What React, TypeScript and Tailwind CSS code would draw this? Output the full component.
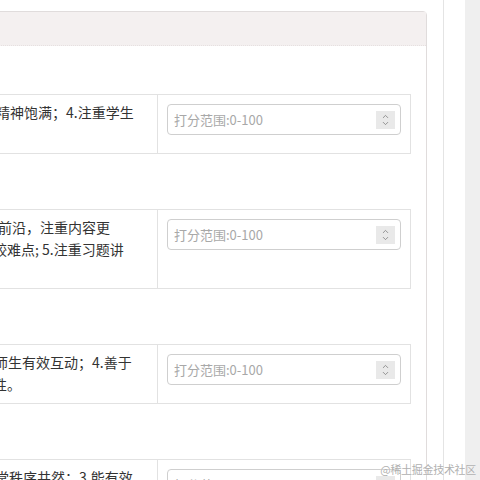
import React from 'react';
import { ChevronUp, ChevronDown } from 'lucide-react';

type Row = {
  lines: { text: string; shift: string }[];
  height: string;
};

const rows: Row[] = [
  { lines: [{ text: '精神饱满；4.注重学生', shift: 'ml-[-6px]' }], height: 'h-[60px]' },
  {
    lines: [
      { text: '前沿，注重内容更', shift: 'ml-[-4px]' },
      { text: '较难点; 5.注重习题讲', shift: 'ml-[-9px]' },
    ],
    height: 'h-[80px]',
  },
  {
    lines: [
      { text: '师生有效互动；4.善于', shift: 'ml-[-8px]' },
      { text: '性。', shift: 'ml-[-9px]' },
    ],
    height: 'h-[60px]',
  },
  { lines: [{ text: '堂秩序井然；3.能有效', shift: 'ml-[-7px]' }], height: 'h-[80px]' },
];

const ScoreInput: React.FC = () => (
  <div className="h-[31px] flex items-center border border-[#cfcfcf] rounded-[4px] bg-white pl-[6px] pr-[5px]">
    <input
      type="text"
      placeholder="打分范围:0-100"
      className="flex-1 min-w-0 text-[13px] text-[#555] placeholder:text-[#a8a8a8] outline-none bg-transparent"
    />
    <div className="w-[19px] h-[18px] bg-[#e9e9e9] flex flex-col items-center justify-center text-[#777]">
      <ChevronUp size={9} strokeWidth={2} className="-mb-[1px]" />
      <ChevronDown size={9} strokeWidth={2} className="-mt-[1px]" />
    </div>
  </div>
);

const App: React.FC = () => {
  return (
    <div
      className="w-[480px] h-[480px] overflow-hidden bg-white flex relative"
      style={{ fontFamily: '"Noto Sans CJK SC", "Liberation Sans", sans-serif' }}
    >
      {/* main column */}
      <div className="w-[443px] flex-none pt-[11px] pr-[16px]">
        <div className="ml-[-40px] border border-[#e0dcdc] rounded-t-[4px] h-[600px]">
          <div className="h-[34px] bg-[#f4f0f0] border-b border-dotted border-[#e6e0e0]" />
          <div className="pt-[48px] pr-[15px] flex flex-col gap-[55px]">
            {rows.map((row, i) => (
              <div key={i} className={`flex border border-[#e2e2e2] ${row.height} flex-none`}>
                <div className="flex-1 overflow-hidden pl-[40px] pt-[7px] text-[14px] leading-[21.5px] text-[#333]">
                  {row.lines.map((l, j) => (
                    <div key={j} className={`whitespace-nowrap ${l.shift}`}>
                      {l.text}
                    </div>
                  ))}
                </div>
                <div className="w-[253px] flex-none border-l border-[#e2e2e2] p-[9px]">
                  <ScoreInput />
                </div>
              </div>
            ))}
          </div>
        </div>
      </div>
      <div className="w-px flex-none bg-[#e4e4e4]" />
      <div className="w-[21px] flex-none bg-white" />
      <div className="flex-1 bg-[#efefef]" />

      {/* watermark */}
      <div className="absolute right-[4px] bottom-[3px] text-[11px] text-[#b0b0b0] tracking-[-0.3px] [text-shadow:0_0_1px_#fff]">
        @稀土掘金技术社区
      </div>
    </div>
  );
};

export default App;
